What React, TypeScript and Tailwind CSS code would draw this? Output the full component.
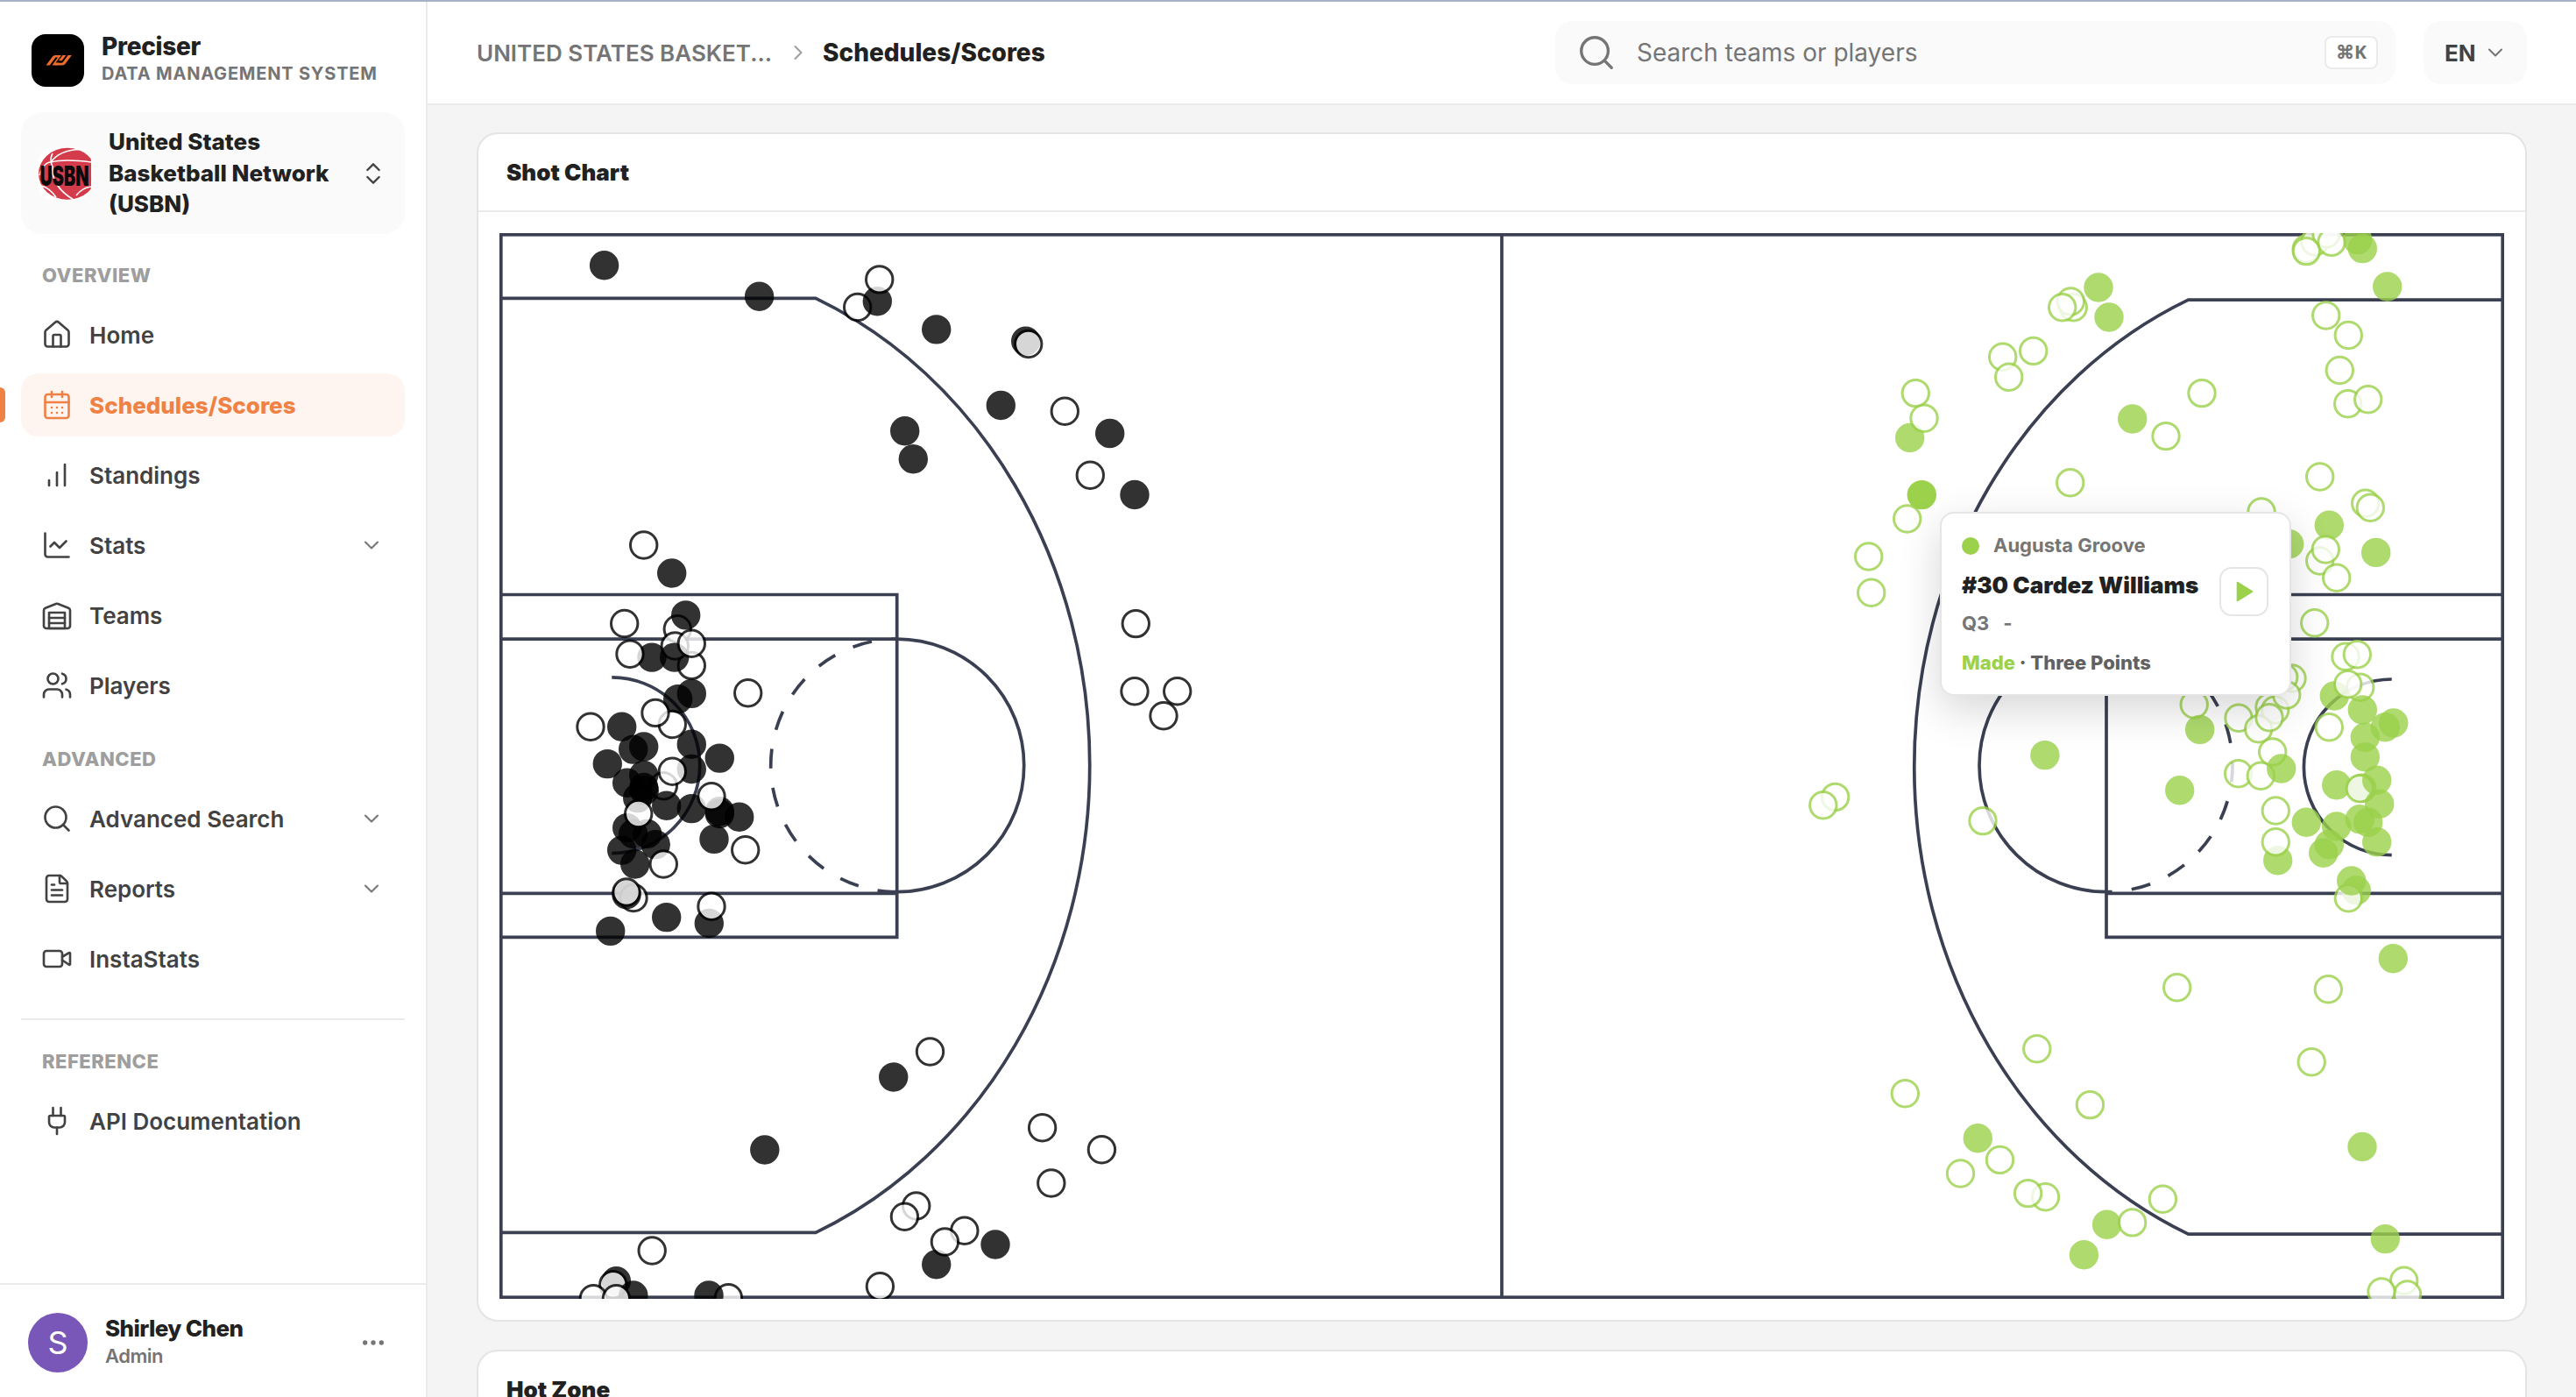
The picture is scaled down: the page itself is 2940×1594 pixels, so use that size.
import type { ReactNode } from "react";
import {
  CalendarDays,
  ChartLine,
  ChevronDown,
  ChevronRight,
  ChevronsUpDown,
  Ellipsis,
  FileText,
  House,
  Plug,
  Search,
  Users,
  Video,
} from "lucide-react";

const LINE = "#3a4052";
const HOME = "#000000";
const AWAY = "#9bd14b";

// [x, y, made] in court units, painted in this order
type Shot = [number, number, 0 | 1, 1?];

const homeShots: Shot[] = [
  [689.6, 302.8, 1],
  [866.6, 338.3, 1],
  [978.7, 350.5, 0],
  [1001.3, 343.8, 1],
  [1003.7, 318.9, 0],
  [1068.7, 375.9, 1],
  [1170.7, 389.3, 1],
  [1173.7, 392.5, 0],
  [1142.3, 462.5, 1],
  [1215.3, 469.2, 0],
  [1266.7, 494.5, 1],
  [1032.7, 491.7, 1],
  [1042.3, 523.7, 1],
  [1244.3, 542.3, 0],
  [1295, 564.5, 1],
  [1296.3, 711.6, 0],
  [1295, 788.7, 0],
  [1343.7, 788.7, 0],
  [1328, 816.7, 0],
  [734.7, 622, 0],
  [766.7, 654, 1],
  [773.3, 717.7, 0],
  [782.7, 701.9, 1],
  [712.7, 711.5, 0],
  [744, 750.1, 1],
  [719, 746.3, 0],
  [789.3, 759.4, 0],
  [770.3, 737, 0],
  [769.7, 750.1, 1],
  [789.3, 734.2, 0],
  [853.7, 790.7, 0],
  [789.3, 791.4, 1],
  [773.7, 797.6, 1],
  [767.3, 826.5, 0],
  [748, 813.4, 0],
  [674, 829.3, 0],
  [709.7, 829.3, 1],
  [722.7, 855.1, 1],
  [734.7, 852, 1],
  [789.3, 849.3, 1],
  [821.3, 865.1, 1],
  [693.3, 871.6, 1],
  [789.3, 877.5, 1],
  [757.3, 896.8, 0],
  [767.3, 880.2, 0],
  [734.7, 884.4, 1],
  [715.7, 893.3, 1],
  [734.7, 898.5, 1],
  [735.3, 901.9, 1],
  [727.7, 910.6, 1],
  [760.7, 919.2, 1],
  [789.3, 922.6, 1],
  [821.3, 925.7, 1],
  [821.3, 928.5, 1],
  [812, 908.8, 0],
  [843.7, 932.2, 1],
  [715.7, 944.6, 1],
  [722.7, 951.5, 1],
  [738.7, 951.5, 1],
  [728.7, 928.5, 0],
  [815, 957.4, 1],
  [748.3, 963.6, 1],
  [709.7, 970.1, 1],
  [850.7, 969.8, 0],
  [757.3, 986, 0],
  [724.7, 986, 1],
  [723, 1024.5, 0],
  [715, 1020.7, 1],
  [715, 1018, 0],
  [760.7, 1046.6, 1],
  [809.3, 1053.5, 1],
  [812, 1034.2, 0],
  [696.7, 1062.4, 1],
  [1061.5, 1200, 0],
  [1019.7, 1229, 1],
  [872.8, 1312, 1],
  [1189.6, 1286.7, 0],
  [1257.4, 1311.7, 0],
  [1199.8, 1350, 0],
  [1045.7, 1376, 0],
  [1032.4, 1388.3, 0],
  [1100.8, 1404.3, 0],
  [1068.7, 1442.7, 1],
  [1078.4, 1417, 0],
  [1136, 1420, 1],
  [1004.4, 1467.7, 0],
  [744.2, 1427, 0],
  [703.4, 1461.7, 1],
  [699.8, 1465.7, 0],
  [722.8, 1478, 1],
  [677.3, 1481.7, 0],
  [703.4, 1481.7, 0],
  [831.4, 1480.7, 0],
  [809, 1478, 1],
];

const awayShots: Shot[] = [
  [2395, 328, 1],
  [2407, 362, 1],
  [2366.3, 350.7, 0],
  [2363.3, 344, 0],
  [2353.7, 350.7, 0],
  [2320.7, 400.4, 0],
  [2285.7, 407.3, 0],
  [2292.7, 430.3, 0],
  [2186.3, 448.6, 0],
  [2179.7, 499.5, 1],
  [2196, 477.3, 0],
  [2176.7, 592, 0],
  [2193.3, 564.6, 1, 1],
  [2132.7, 635, 0],
  [2135.7, 676.3, 0],
  [2513, 448.6, 0],
  [2433.7, 478, 1],
  [2472, 497.6, 0],
  [2362.7, 550.8, 0],
  [2333.9, 861.6, 1],
  [2263, 936.6, 0],
  [2094.6, 909.4, 0],
  [2080.8, 918.8, 0],
  [2487.7, 901.7, 1],
  [2632.3, 284, 0],
  [2642, 276, 0],
  [2655, 267, 0],
  [2632.3, 286.6, 0],
  [2690.7, 273.6, 1],
  [2661, 276.4, 0],
  [2696.3, 283.6, 1],
  [2724.7, 327, 1],
  [2654.7, 360, 0],
  [2680.3, 382.5, 0],
  [2670.3, 422.5, 0],
  [2679.7, 460.7, 0],
  [2702.7, 455.7, 0],
  [2647.7, 544, 0],
  [2699.7, 574.3, 0],
  [2705.3, 579.3, 0],
  [2658.3, 599.3, 1],
  [2647.7, 640, 0],
  [2654.3, 627, 0],
  [2711.7, 630.4, 1],
  [2666.7, 659.3, 0],
  [2612.7, 620.7, 1],
  [2581, 584, 0],
  [2641.7, 710.7, 0],
  [2677, 749.3, 0],
  [2690.3, 746.7, 0],
  [2664.3, 794, 1],
  [2693.7, 784.3, 0],
  [2679.7, 780.7, 0],
  [2696.3, 810, 1],
  [2722.3, 829.7, 1],
  [2731.7, 825, 1],
  [2699.3, 841.3, 1],
  [2699.3, 863.7, 1],
  [2658.3, 829.7, 0],
  [2616, 774, 0],
  [2606.7, 772.7, 0],
  [2590, 806.7, 0],
  [2596.7, 810, 0],
  [2609.7, 793, 0],
  [2555, 819.3, 0],
  [2577.7, 831.7, 0],
  [2590, 818.7, 0],
  [2593.7, 858, 0],
  [2554.7, 882.7, 0],
  [2580.3, 885.3, 0],
  [2603.7, 877, 1],
  [2504.2, 804, 0],
  [2510.7, 832.4, 1],
  [2666.7, 895.7, 1],
  [2695.7, 899.3, 1],
  [2693.3, 899.7, 0],
  [2712.7, 890.3, 1],
  [2715.7, 917.3, 1],
  [2693.3, 934.7, 1],
  [2702.7, 938.3, 1],
  [2632.3, 938.3, 1],
  [2666.7, 943, 1],
  [2658.3, 963.7, 1],
  [2651.7, 973.3, 1],
  [2712.7, 960.7, 1],
  [2597.3, 925, 0],
  [2599.7, 981.7, 1],
  [2597.3, 960.7, 0],
  [2689.3, 1016, 1],
  [2680.3, 1024.7, 0],
  [2683.7, 1005, 1],
  [2731.3, 1093.7, 1],
  [2484.7, 1126.7, 0],
  [2657.3, 1128.7, 0],
  [2638.2, 1211.7, 0],
  [2324.8, 1196.8, 0],
  [2174.3, 1247.8, 0],
  [2385.4, 1260.6, 0],
  [2257.3, 1298.8, 1],
  [2282.5, 1323.4, 0],
  [2237.5, 1339, 0],
  [2334.5, 1365.8, 0],
  [2314.6, 1361.6, 0],
  [2468.4, 1368.2, 0],
  [2404.6, 1397.3, 1],
  [2433.6, 1394.9, 0],
  [2378.4, 1431.7, 1],
  [2696, 1308.5, 1],
  [2722.3, 1413.6, 1],
  [2743.7, 1461.2, 0],
  [2747.5, 1477, 0],
  [2718, 1474, 0],
];

function Shots({ shots, color }: { shots: Shot[]; color: string }) {
  return (
    <g stroke={color} strokeWidth="3">
      {shots.map(([x, y, made, active], i) => (
        <circle
          key={i}
          cx={x}
          cy={y}
          r="15.2"
          fill={made ? color : "#fff"}
          opacity={active ? 1 : 0.8}
        />
      ))}
    </g>
  );
}

function Court() {
  return (
    <svg viewBox="570 266 2288 1216" className="block h-[1216px] w-[2288px]">
      <g fill="none" stroke={LINE} strokeWidth="3.7">
        <rect x="571.8" y="267.8" width="2284.4" height="1212.4" />
        <path d="M1714 268V1480" />

        {/* left half */}
        <path d="M572 340.3H931A515.4 579.7 0 0 1 931 1406.3H572" />
        <path d="M572 678.5H1023.7V1069.3H572" />
        <path d="M572 729.1H1023.7M572 1019.4H1023.7" />
        <path d="M1023.7 729.1A145 144.3 0 0 1 1023.7 1017.7" />
        <path d="M1023.7 1017.7A144 144.3 0 0 1 1023.7 729.1" strokeDasharray="22.3" />
        <path d="M698.3 772.8A100 100 0 0 1 698.3 973.6" />

        {/* right half */}
        <path d="M2856 342.1H2497.5A515.4 579.7 0 0 0 2497.5 1408.1H2856" />
        <path d="M2856 678.5H2404V1069.3H2856" />
        <path d="M2856 729.1H2404M2856 1019.4H2404" />
        <path d="M2404 729.1A145 144.3 0 0 0 2404 1017.7" />
        <path d="M2404 729.1A144 144.3 0 0 1 2404 1017.7" strokeDasharray="22.3" />
        <path d="M2729.7 775A100 100 0 0 0 2729.7 975.7" />
      </g>
      <Shots shots={homeShots} color={HOME} />
      <Shots shots={awayShots} color={AWAY} />
    </svg>
  );
}

function ShotTooltip() {
  return (
    <div className="absolute top-[342px] left-[1668px] flex h-[210px] w-[401px] items-center justify-between rounded-2xl border-2 border-[#e5e5e5] bg-white pr-6 pl-[23px] shadow-[0_16px_48px_rgba(0,0,0,0.16)]">
      <div className="flex flex-col whitespace-nowrap">
        <div className="flex h-[30px] items-center gap-4 text-[22px] font-bold text-[#757575]">
          <span className="size-5 rounded-full bg-[#9bd14b]" />
          Augusta Groove
        </div>
        <div className="mt-3 h-9 text-[26px] leading-9 font-black text-[#212121]">
          #30 Cardez Williams
        </div>
        <div className="mt-[11px] flex h-[30px] items-center gap-4 text-[22px] font-bold text-[#757575]">
          <span>Q3</span>
          <span>-</span>
        </div>
        <div className="mt-[14px] h-[30px] text-[22px] leading-[30px] font-extrabold text-[#616161]">
          <span className="text-[#9bd14b]">Made</span> · Three Points
        </div>
      </div>
      <button className="mt-[-28px] flex size-14 items-center justify-center rounded-[14px] border-2 border-[#e5e5e5] bg-white">
        <svg viewBox="0 0 20 24" className="ml-0.5 h-6 w-5">
          <path
            d="M1.5 1.5 18.5 12 1.5 22.5Z"
            fill={AWAY}
            stroke={AWAY}
            strokeWidth="1.6"
            strokeLinejoin="round"
          />
        </svg>
      </button>
    </div>
  );
}

function StandingsIcon() {
  return (
    <svg
      viewBox="0 0 24 24"
      fill="none"
      stroke="currentColor"
      strokeWidth="1.75"
      strokeLinecap="round"
      className="size-9"
    >
      <path d="M12 20V10M18 20V4M6 20v-4" />
    </svg>
  );
}

function TeamsIcon() {
  return (
    <svg
      viewBox="0 0 24 24"
      fill="none"
      stroke="currentColor"
      strokeWidth="1.75"
      strokeLinecap="round"
      strokeLinejoin="round"
      className="size-9"
    >
      <path d="M22 8.35V20a2 2 0 0 1-2 2H4a2 2 0 0 1-2-2V8.35A2 2 0 0 1 3.26 6.5l8-3.2a2 2 0 0 1 1.48 0l8 3.2A2 2 0 0 1 22 8.35Z" />
      <path d="M6 18h12M6 14h12" />
      <path d="M6 10h12v12H6z" />
    </svg>
  );
}

function NavItem({
  icon,
  label,
  active,
  expandable,
}: {
  icon: ReactNode;
  label: string;
  active?: boolean;
  expandable?: boolean;
}) {
  return (
    <div
      className={`relative flex h-[72px] items-center gap-[19px] rounded-[20px] pr-6 pl-[23px] text-[26px] ${
        active ? "bg-[#fef5f0] font-extrabold text-[#ef8145]" : "font-semibold text-[#424242]"
      }`}
    >
      {active && (
        <span className="absolute top-4 -left-6 h-10 w-1.5 rounded-r-md bg-[#ef8145]" />
      )}
      {icon}
      <span className="flex-1">{label}</span>
      {expandable && <ChevronDown size={28} strokeWidth={1.75} className="text-[#757575]" />}
    </div>
  );
}

function SectionLabel({ children }: { children: ReactNode }) {
  return (
    <div className="pl-6 text-[22px] leading-8 font-extrabold tracking-[0.5px] text-[#9e9e9e]">
      {children}
    </div>
  );
}

function PreciserLogo() {
  return (
    <svg viewBox="0 0 60 60" className="size-[60px] shrink-0">
      <rect width="60" height="60" rx="16" fill="#000" />
      <g fill="#ee6c2c">
        <path d="M16.5 35.5 24 25.5Q25 24 27 24H34L27.6 32.6H31L28.8 35.5H23.4L30 26.6H27.4L20.8 35.5Z" />
        <path d="M35.5 24H39.4L34.6 30.2H30.8Z" />
        <path d="M41.6 24H45.8L38.8 33.6Q37.4 35.5 35.2 35.5H27L29 32.7H34.4Q35.2 32.7 35.8 31.9Z" />
      </g>
    </svg>
  );
}

function LeagueLogo() {
  return (
    <svg viewBox="0 0 60 60" className="size-[60px] shrink-0 rounded-2xl">
      <rect width="60" height="60" fill="#fff" />
      <ellipse cx="33" cy="30.3" rx="33" ry="29.5" fill="#d43c4b" />
      <g fill="none" stroke="#fff" strokeWidth="1.6">
        <path d="M14 17Q30 13 60 17" />
        <path d="M14 17Q24 3 48 2.5Q56 3 60 7" />
        <path d="M16 7Q12 14 16 22Q14 44 40 60" />
        <path d="M1 32Q6 17 14 17" />
        <path d="M43 55Q50 46 60 45" />
        <path d="M3 44Q12 46 20 57" />
      </g>
      <text
        x="1.5"
        y="28.4"
        transform="scale(1 1.55)"
        textLength="56"
        lengthAdjust="spacingAndGlyphs"
        fontFamily="Inter, sans-serif"
        fontWeight="900"
        fontSize="20"
        fill="#0a0a0a"
      >
        USBN
      </text>
    </svg>
  );
}

function Sidebar() {
  return (
    <aside className="flex h-full w-[488px] shrink-0 flex-col border-r-2 border-[#ebebeb] bg-white">
      <div className="flex h-[126px] items-center gap-5 pt-2 pl-9">
        <PreciserLogo />
        <div className="pb-1">
          <div className="text-[28px] leading-[34px] font-extrabold tracking-[-0.3px] text-[#212121]">
            Preciser
          </div>
          <div className="text-[20px] leading-7 font-bold tracking-[0.8px] text-[#757575]">
            DATA MANAGEMENT SYSTEM
          </div>
        </div>
      </div>

      <div className="mx-6 flex h-[139px] w-[438px] items-center gap-5 rounded-3xl bg-[#fafafa] pr-5 pl-5">
        <LeagueLogo />
        <div className="w-[262px] text-[26px] leading-[35.75px] font-extrabold text-[#212121]">
          United States Basketball Network (USBN)
        </div>
        <ChevronsUpDown size={32} strokeWidth={1.75} className="ml-auto text-[#424242]" />
      </div>

      <nav className="flex flex-1 flex-col px-6 pt-[31px]">
        <SectionLabel>OVERVIEW</SectionLabel>
        <div className="mt-4 flex flex-col gap-2">
          <NavItem icon={<House size={36} strokeWidth={1.75} />} label="Home" />
          <NavItem
            icon={<CalendarDays size={36} strokeWidth={1.75} />}
            label="Schedules/Scores"
            active
          />
          <NavItem icon={<StandingsIcon />} label="Standings" />
          <NavItem icon={<ChartLine size={36} strokeWidth={1.75} />} label="Stats" expandable />
          <NavItem icon={<TeamsIcon />} label="Teams" />
          <NavItem icon={<Users size={36} strokeWidth={1.75} />} label="Players" />
        </div>

        <div className="mt-8">
          <SectionLabel>ADVANCED</SectionLabel>
        </div>
        <div className="mt-4 flex flex-col gap-2">
          <NavItem
            icon={<Search size={36} strokeWidth={1.75} />}
            label="Advanced Search"
            expandable
          />
          <NavItem icon={<FileText size={36} strokeWidth={1.75} />} label="Reports" expandable />
          <NavItem icon={<Video size={36} strokeWidth={1.75} />} label="InstaStats" />
        </div>

        <div className="mt-8 border-t-2 border-[#ebebeb] pt-[31px]">
          <SectionLabel>REFERENCE</SectionLabel>
        </div>
        <div className="mt-4">
          <NavItem icon={<Plug size={36} strokeWidth={1.75} />} label="API Documentation" />
        </div>
      </nav>

      <div className="flex h-[130px] items-center border-t-2 border-[#ebebeb] pt-1 pr-11 pl-8">
        <div className="flex size-[68px] items-center justify-center rounded-full bg-[#7857b8] text-[36px] text-white">
          S
        </div>
        <div className="-mt-[3px] ml-5">
          <div className="text-[26px] leading-8 font-extrabold tracking-[-0.6px] text-[#212121]">
            Shirley Chen
          </div>
          <div className="text-[22px] leading-[30px] font-semibold tracking-[-0.5px] text-[#757575]">
            Admin
          </div>
        </div>
        <Ellipsis size={32} className="ml-auto text-[#757575]" />
      </div>
    </aside>
  );
}

function Header() {
  return (
    <header className="flex h-[118px] shrink-0 items-center border-b-2 border-[#ebebeb] bg-white pr-14 pl-14">
      <span className="text-[26px] font-semibold text-[#757575]">UNITED STATES BASKET...</span>
      <ChevronRight size={28} strokeWidth={1.75} className="mr-[14px] ml-4 text-[#9e9e9e]" />
      <span className="text-[28px] font-extrabold text-[#212121]">Schedules/Scores</span>

      <div className="ml-auto flex h-[72px] w-[959px] items-center rounded-[20px] bg-[#fafafa] pr-5 pl-6">
        <Search size={46} strokeWidth={1.75} className="text-[#757575]" />
        <span className="ml-[23px] flex-1 text-[28px] text-[#757575]">
          Search teams or players
        </span>
        <kbd className="flex h-[38px] w-[61px] items-center justify-center rounded-lg border-2 border-[#ebebeb] bg-white font-sans text-[21px] font-bold text-[#757575]">
          ⌘K
        </kbd>
      </div>
      <div className="ml-8 flex h-[72px] w-[118px] items-center justify-between rounded-[20px] bg-[#fafafa] pr-[22px] pl-6 text-[26px] font-bold text-[#424242]">
        EN
        <ChevronDown size={28} strokeWidth={1.75} className="text-[#757575]" />
      </div>
    </header>
  );
}

function Card({ title, children }: { title: string; children?: ReactNode }) {
  return (
    <section className="shrink-0 rounded-3xl border-2 border-[#e4e4e4] bg-white">
      <h2 className="flex h-[89px] items-center border-b-2 border-[#ebebeb] pl-8 text-[26px] font-black text-[#212121]">
        {title}
      </h2>
      <div className="relative p-6">{children}</div>
    </section>
  );
}

export default function App() {
  return (
    <div className="flex h-[1594px] w-[2940px] flex-col overflow-hidden border-t-2 border-[#a5b1c5] bg-[#f4f4f4] font-[Inter,sans-serif]">
      <div className="flex min-h-0 flex-1">
        <Sidebar />
        <div className="flex min-w-0 flex-1 flex-col overflow-hidden">
          <Header />
          <main className="flex flex-1 flex-col gap-8 overflow-hidden px-14 pt-[31px]">
            <Card title="Shot Chart">
              <Court />
              <ShotTooltip />
            </Card>
            <Card title="Hot Zone" />
          </main>
        </div>
      </div>
    </div>
  );
}
